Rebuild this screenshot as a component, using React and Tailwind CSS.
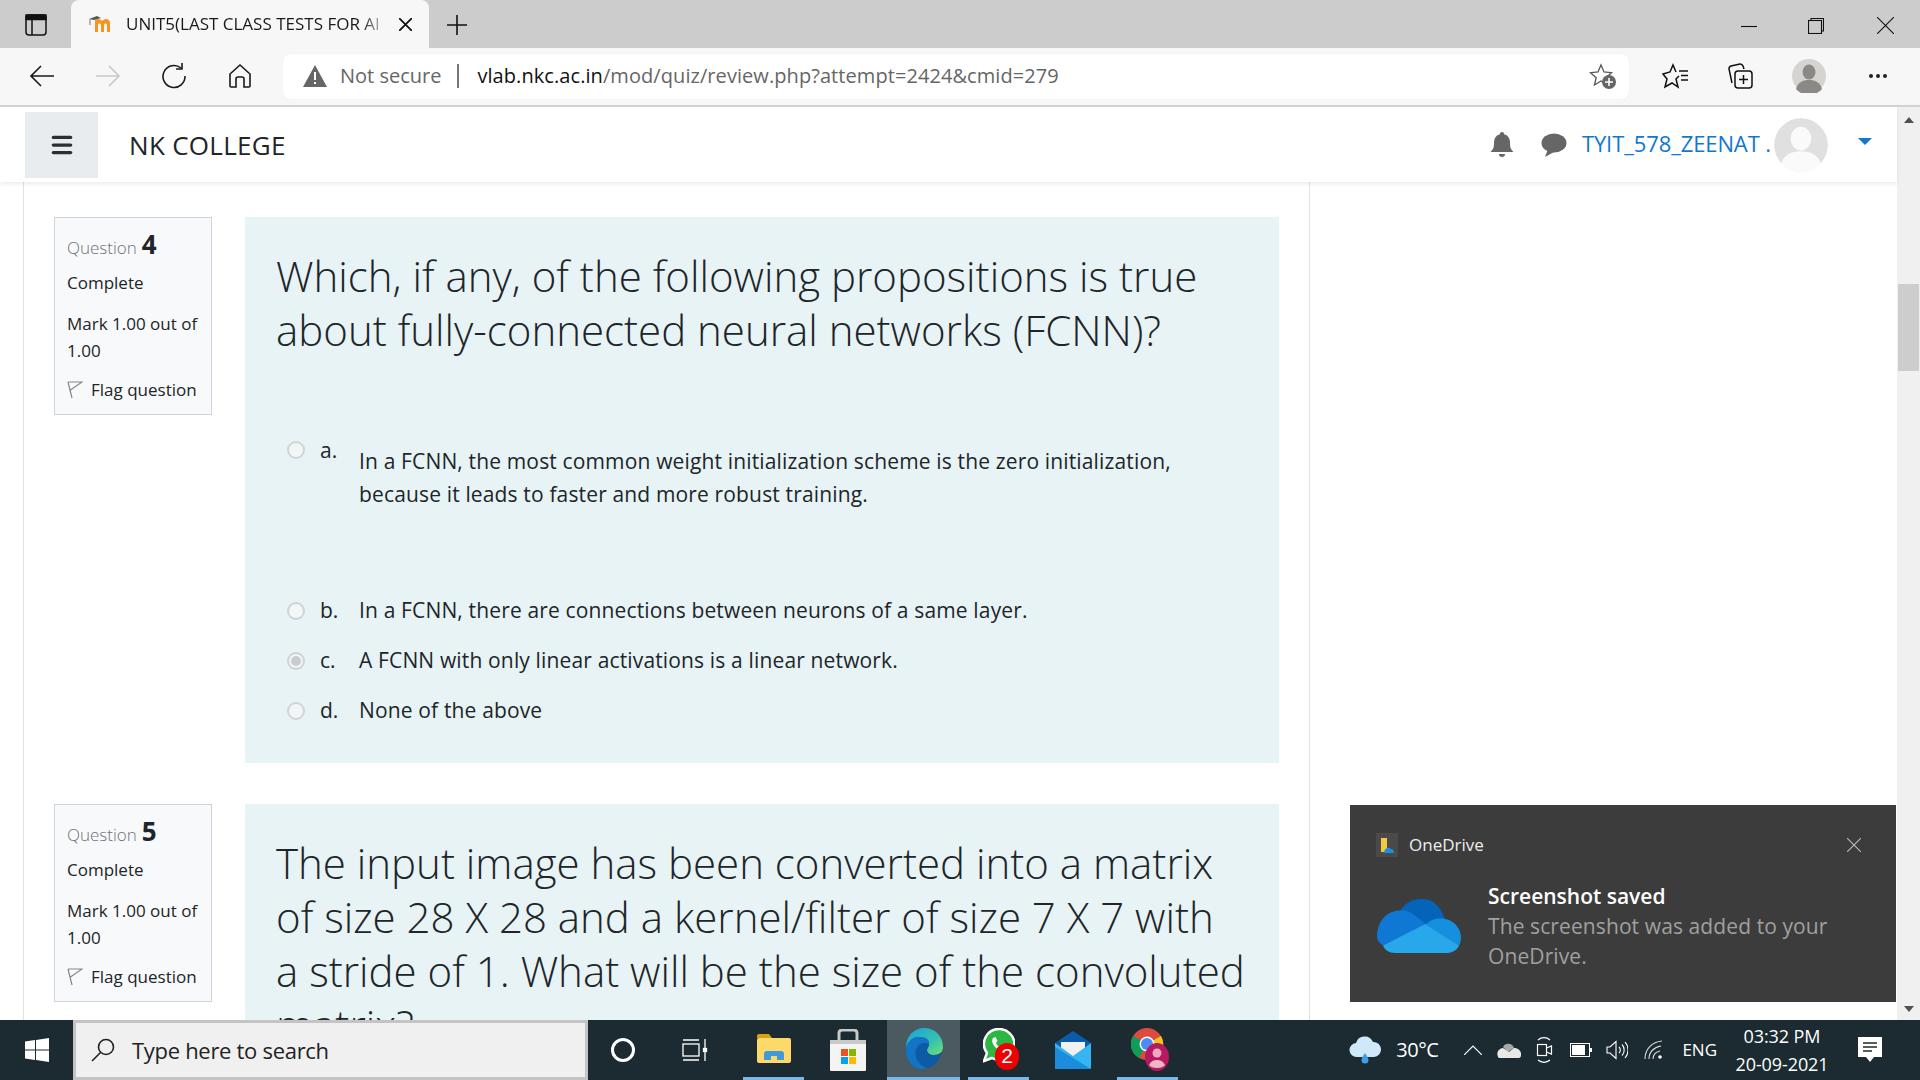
import React from "react";
import { Menu } from "lucide-react";

const uiFont = "font-['Open_Sans','Noto_Sans',sans-serif]";

const MoodleIcon = () => (
  <svg width="24" height="20" viewBox="0 0 24 20">
    <path d="M6 9v9h3v-7c0-2 3-2 3 0v7h3v-7c0-2 3-2 3 0v7h3V9c0-3-2-4-4-4-2 0-3 1-3.500 2C12 6 11 5 9 5 8 5 7 5.500 6 6z" fill="#f7931e" />
    <path d="M0 5l8-3 4 2-7 2z" fill="#555" />
    <path d="M1 5v6" stroke="#777" strokeWidth="1" />
  </svg>
);

const BackIcon = ({ color = "#1a1a1a" }) => (
  <svg width="26" height="24" viewBox="0 0 26 24" fill="none" stroke={color} strokeWidth="1.600">
    <path d="M2 12h23M12 2L2 12l10 10" />
  </svg>
);

const RefreshIcon = () => (
  <svg width="26" height="26" viewBox="0 0 26 26" fill="none" stroke="#1a1a1a" strokeWidth="1.600">
    <path d="M20 5a11 11 0 1 0 4 8" />
    <path d="M21 0v6h-6" />
  </svg>
);

const HomeIcon = () => (
  <svg width="24" height="26" viewBox="0 0 24 26" fill="none" stroke="#1a1a1a" strokeWidth="1.600">
    <path d="M2 11l10-9 10 9v12a1 1 0 0 1-1 1h-5v-8a2 2 0 0 0-2-2h-4a2 2 0 0 0-2 2v8H3a1 1 0 0 1-1-1z" />
  </svg>
);

const WarningIcon = () => (
  <svg width="24" height="22" viewBox="0 0 24 22">
    <path d="M12 0L24 22H0z" fill="#666" />
    <path d="M11 7h2v8h-2zM11 17h2v2h-2z" fill="#fff" />
  </svg>
);

const StarPlusIcon = () => (
  <svg width="28" height="26" viewBox="0 0 28 26" fill="none">
    <path d="M12 2l3 7 7.500.700-5.700 5 1.700 7.300L12 18l-6.500 4 1.700-7.300-5.700-5L9 9z" stroke="#555" strokeWidth="1.300" />
    <circle cx="20" cy="19" r="7" fill="#666" />
    <path d="M20 15v8M16 19h8" stroke="#fff" strokeWidth="1.600" />
  </svg>
);

const FavoritesIcon = () => (
  <svg width="28" height="26" viewBox="0 0 28 26" fill="none" stroke="#111" strokeWidth="1.500">
    <path d="M17 13l-3 3 2 8-6-4-7 4 2-8-4-5 7-2 3-7 3 7" />
    <path d="M17 8h9M19 12.500h7M19 17h7" />
  </svg>
);

const CollectionsIcon = () => (
  <svg width="28" height="28" viewBox="0 0 28 28" fill="none" stroke="#111" strokeWidth="1.500">
    <path d="M6 21l-3-14a3 3 0 0 1 2-3l9-2a3 3 0 0 1 3 2l1 3" />
    <rect x="9" y="9" width="17" height="17" rx="3" />
    <path d="M17.500 13v9M13 17.500h9" />
  </svg>
);

const PersonIcon = ({ size = 34, bg = "#d6d4d0", fg = "#8b8986" }) => (
  <svg width={size} height={size} viewBox="0 0 34 34">
    <circle cx="17" cy="17" r="17" fill={bg} />
    <ellipse cx="17" cy="13" rx="6.500" ry="7.500" fill={fg} />
    <path d="M4 30c2-7 7-9 13-9s11 2 13 9a17 17 0 0 1-26 0z" fill={fg} />
  </svg>
);

const BellIcon = () => (
  <svg width="24" height="26" viewBox="0 0 24 26" fill="#666">
    <path d="M12 0a2 2 0 0 1 2 2.300C18 3.200 20 6.500 20 11c0 5 1 6.500 3.500 9H.500C3 17.500 4 16 4 11c0-4.500 2-7.800 6-8.700A2 2 0 0 1 12 0z" />
    <path d="M9 22h6a3 3 0 0 1-6 0z" />
  </svg>
);

const ChatIcon = () => (
  <svg width="26" height="24" viewBox="0 0 26 24" fill="#666">
    <ellipse cx="13" cy="10" rx="12.500" ry="9.500" />
    <path d="M7 16l-3 8 9-5z" />
  </svg>
);

const FlagIcon = () => (
  <svg width="16" height="18" viewBox="0 0 16 18" fill="none" stroke="#888" strokeWidth="1.200">
    <path d="M1 1l4 16M1 1h14L3.500 9" />
  </svg>
);

const WindowsLogo = () => (
  <svg width="24" height="24" viewBox="0 0 24 24" fill="#fff">
    <path d="M0 3.400l10-1.400v9.500H0zM11 1.900L24 0v11.500H11zM0 12.500h10V22L0 20.600zM11 12.500h13V24l-13-1.900z" />
  </svg>
);

const SearchIcon = () => (
  <svg width="24" height="24" viewBox="0 0 24 24" fill="none" stroke="#222" strokeWidth="1.600">
    <circle cx="15" cy="9" r="7.500" />
    <path d="M9.500 14.500L1 23" />
  </svg>
);

const TaskViewIcon = () => (
  <svg width="26" height="24" viewBox="0 0 26 24" fill="none" stroke="#fff" strokeWidth="1.300">
    <path d="M1 2h16M1 22h16" />
    <rect x="1" y="6" width="16" height="12" />
    <path d="M23 1v9M23 14v9" />
    <rect x="21.500" y="10.500" width="3" height="3" fill="#fff" />
  </svg>
);

const ExplorerIcon = () => (
  <svg width="34" height="30" viewBox="0 0 34 30">
    <path d="M0 2a2 2 0 0 1 2-2h10l3 4H0z" fill="#d9a10f" />
    <rect y="4" width="34" height="25" rx="2" fill="#fcd96a" />
    <path d="M7 26v-6a3 3 0 0 1 3-3h14a3 3 0 0 1 3 3v6h-7v-4h-6v4z" fill="#3f9ad8" />
  </svg>
);

const StoreIcon = () => (
  <svg width="36" height="42" viewBox="0 0 36 42">
    <path d="M9 12V4a3 3 0 0 1 3-3h12a3 3 0 0 1 3 3v8" fill="none" stroke="#c8c8c8" strokeWidth="3" />
    <path d="M0 11h36v30a1 1 0 0 1-1 1H1a1 1 0 0 1-1-1z" fill="#f4f4f4" />
    <rect y="11" width="36" height="4" fill="#c9c9c9" />
    <rect x="11" y="20" width="7" height="7" fill="#f25022" />
    <rect x="19" y="20" width="7" height="7" fill="#7fba00" />
    <rect x="11" y="28" width="7" height="7" fill="#00a4ef" />
    <rect x="19" y="28" width="7" height="7" fill="#ffb900" />
  </svg>
);

const EdgeIcon = () => (
  <svg width="38" height="42" viewBox="0 0 38 42">
    <defs>
      <linearGradient id="edgeTop" x1="0" y1="0" x2="1" y2="1">
        <stop offset="0" stopColor="#1aa3d9" />
        <stop offset="0.600" stopColor="#35c1b0" />
        <stop offset="1" stopColor="#71e26d" />
      </linearGradient>
    </defs>
    <path d="M1 20C1 8 9 0 19 0c11 0 19 8 19 19 0 5-4 8-9 8-4 0-7-2-7-5 0-2 2-3 2-6 0-4-4-7-9-7C8 9 3 14 1 20z" fill="url(#edgeTop)" />
    <path d="M1 20C3 12 9 8 15 9c6 0 10 3 9 7-4-2-11-1-13 6-2 8 3 15 11 18a20 20 0 0 1-5 1C8 41 0 32 1 20z" fill="#1174c6" />
    <path d="M11 22c2-7 9-8 13-6 0 3-2 4-2 6 0 3 3 5 7 5 3 0 6-1 8-3-3 10-9 15-15 16-8-3-13-10-11-18z" fill="#0d5aa7" />
  </svg>
);

const WhatsappIcon = () => (
  <div className="relative w-[37px] h-[42px] ml-[6px]">
    <svg width="32" height="38" viewBox="0 0 32 38" className="absolute left-0 top-0">
      <path d="M16 1a15 15 0 0 1 0 31 15 15 0 0 1-7-2l-8 3 3-8A15 15 0 0 1 16 1z" fill="#2bb741" stroke="#fff" strokeWidth="2.500" />
      <path d="M10 10c-2 3 0 7 3 10s7 4 9 3l1-3-4-2-1.500 1.500c-2-1-3.500-2.500-4.500-4.500l1.500-2-2-4z" fill="#fff" />
    </svg>
    <div className="absolute left-[12px] top-[15px] w-[24px] h-[27px] rounded-full bg-[#f00000] flex items-center justify-center text-white text-[21px] font-['Liberation_Sans',sans-serif]">
      2
    </div>
  </div>
);

const MailIcon = () => (
  <svg width="36" height="38" viewBox="0 0 36 38">
    <path d="M0 12L18 0l18 12v6H0z" fill="#0a5ba8" />
    <path d="M6 11h24v10l-12 5-12-5z" fill="#f1f1f1" />
    <path d="M0 12l18 13 18-13v25a1 1 0 0 1-1 1H1a1 1 0 0 1-1-1z" fill="#36b5f0" />
    <path d="M0 38V16l36 22z" fill="#1c8ddc" />
  </svg>
);

const ChromeProfileIcon = () => (
  <svg width="38" height="44" viewBox="0 0 38 44" className="ml-[4px]">
    <circle cx="16" cy="17" r="16" fill="#db4c3f" />
    <path d="M16 17L30 9a16 16 0 0 1-14 24z" fill="#f5c518" />
    <path d="M16 17L8 31A16 16 0 0 1 2 9z" fill="#0f9d58" />
    <circle cx="16" cy="17" r="7.500" fill="#fff" />
    <circle cx="16" cy="17" r="6" fill="#4c8bf5" />
    <ellipse cx="26" cy="30" rx="12" ry="14" fill="#b6195f" />
    <circle cx="26" cy="26" r="4.500" fill="#f0a8c0" />
    <path d="M18 38c2-4 5-5 8-5s6 1 8 5c-2 4-14 4-16 0z" fill="#f0b6c8" />
  </svg>
);

const OneDriveCloud = ({ className }) => (
  <svg viewBox="0 0 84 58" preserveAspectRatio="none" className={className}>
    <path d="M20 22C22 8 33 0 45 0c10 0 18 6 23 22L50 38z" fill="#0364b8" />
    <path d="M0 40C0 24 10 12 24 12c4 0 8 1 12 4l14 12L6 50C2 47 0 44 0 40z" fill="#0f78d4" />
    <path d="M62 21c13-1 22 9 22 21 0 3-1 6-2 8L48 28c4-4 9-7 14-7z" fill="#1490df" />
    <path d="M6 50l42-23 34 23c-2 5-7 8-12 8H18c-6 0-10-3-12-8z" fill="#28a8ea" />
  </svg>
);

const OneDriveSmall = () => (
  <div className="w-[22px] h-[24px] bg-[#4a4a4a] flex items-center justify-center">
    <svg width="14" height="16" viewBox="0 0 14 16">
      <path d="M1 1h6v14H1z" fill="#f5c842" />
      <path d="M4 16c0-4 4-7 7-4 2 0 3 2 3 4z" fill="#1b8fe4" />
    </svg>
  </div>
);

const WeatherIcon = () => (
  <svg width="32" height="30" viewBox="0 0 32 30">
    <path d="M8 22a7 7 0 0 1-1-14 9 9 0 0 1 17-1 7.500 7.500 0 0 1 1 15z" fill="#cfe8fa" />
    <path d="M16 18c2 3 3.500 5 3.500 7a3.500 3.500 0 0 1-7 0c0-2 1.500-4 3.500-7z" fill="#3aa0e8" />
  </svg>
);

const TrayCloud = () => (
  <svg width="24" height="18" viewBox="0 0 24 18">
    <path d="M6 6a6 6 0 0 1 11 1l-6 4z" fill="#a8a8a8" />
    <path d="M2 17C-1 14 0 8 6 7l6 4 5-4c5 0 8 4 7 8-.5 1-1 2-2 2z" fill="#e8e8e8" />
  </svg>
);

const MeetIcon = () => (
  <svg width="18" height="26" viewBox="0 0 18 26" fill="none" stroke="#fff" strokeWidth="1.200">
    <path d="M2 3a9 9 0 0 1 12 0M2 23a9 9 0 0 0 12 0" />
    <rect x="1.500" y="7.500" width="9" height="11" />
    <path d="M10.500 11l5-2v8l-5-2" />
  </svg>
);

const BatteryIcon = () => (
  <svg width="22" height="14" viewBox="0 0 22 14">
    <rect x="0.500" y="0.500" width="19" height="13" fill="none" stroke="#fff" />
    <rect x="2" y="2" width="13" height="10" fill="#fff" />
    <rect x="20" y="5" width="2" height="4" fill="#fff" />
  </svg>
);

const VolumeIcon = () => (
  <svg width="22" height="20" viewBox="0 0 22 20" fill="none" stroke="#fff" strokeWidth="1.100">
    <path d="M1 7h3l6-5.500v17L4 13H1z" />
    <path d="M13 7a4 4 0 0 1 0 6M16 4.500a8 8 0 0 1 0 11M19 2a12 12 0 0 1 0 16" />
  </svg>
);

const WifiIcon = () => (
  <svg width="20" height="20" viewBox="0 0 20 20" fill="none" stroke="#ddd" strokeWidth="1.100">
    <path d="M1 19C1 9 8 2 18 1M5 19c0-7 5-12 12-13M9 19c0-4 3-7 7-8" />
    <circle cx="16" cy="17" r="1.800" fill="#fff" stroke="none" />
  </svg>
);

const ActionCenterIcon = () => (
  <svg width="24" height="26" viewBox="0 0 24 26">
    <path d="M0 0h24v20h-8l-4 5-4-5H0z" fill="#fff" />
    <path d="M5 6h14M5 10h14M5 14h9" stroke="#1b2b31" strokeWidth="1.300" />
  </svg>
);

const QuestionInfo = ({ number }) => (
  <div className="w-[158px] h-[198px] shrink-0 border border-[#ced4da] bg-[#f8f9fa] pl-3 pt-[13px] text-[17px] text-[#212529] leading-[27px]">
    <div className="h-[27px] flex items-baseline">
      <span className="text-[#6a737b] font-light">Question</span>
      <span className="ml-[5px] text-[26px] font-bold leading-[27px]">{number}</span>
    </div>
    <div className="mt-[11px]">Complete</div>
    <div className="mt-[14px]">Mark 1.00 out of 1.00</div>
    <div className="mt-[12px] flex items-center gap-[8px]">
      <FlagIcon />
      <span>Flag question</span>
    </div>
  </div>
);

const Radio = ({ checked }) => (
  <span className="w-[18px] h-[18px] rounded-full border-2 border-[#cfd4d6] bg-[#f3f6f7] flex items-center justify-center shrink-0">
    {checked && <span className="w-[10px] h-[10px] rounded-full bg-[#c9cccd]" />}
  </span>
);

const Option = ({ letter, checked, children }) => (
  <div className="flex items-center h-[50px]">
    <Radio checked={checked} />
    <span className="w-[54px] pl-[15px] text-[21px] shrink-0">{letter}</span>
    <span className="text-[21px] tracking-[0.15px]">{children}</span>
  </div>
);

const Notification = () => (
  <div className="absolute left-[1350px] top-[698px] w-[546px] h-[197px] bg-[#3c3c3c] text-white">
    <div className="flex items-center pl-[26px] pt-[27px]">
      <OneDriveSmall />
      <span className="ml-[11px] text-[17px] text-[#eeeeee]">OneDrive</span>
      <svg width="14" height="14" viewBox="0 0 14 14" className="ml-auto mr-[35px]" fill="none" stroke="#bbb" strokeWidth="1.100">
        <path d="M0 0l14 14M14 0L0 14" />
      </svg>
    </div>
    <div className="flex pl-[27px] pt-[23px]">
      <OneDriveCloud className="w-[84px] h-[54px] mt-[18px]" />
      <div className="ml-[27px]">
        <div className="text-[21px] leading-[30px] font-semibold">Screenshot saved</div>
        <div className="text-[21px] leading-[30px] text-[#a0a0a0] w-[370px] tracking-[0.1px]">
          The screenshot was added to your OneDrive.
        </div>
      </div>
    </div>
  </div>
);

function ForwardIcon() {
  return (
    <div className="scale-x-[-1]">
      <BackIcon color="#c8c8c8" />
    </div>
  );
}

export default function App() {
  return (
    <div className={`w-[1920px] h-[1080px] flex flex-col overflow-hidden bg-white ${uiFont}`}>
      {/* browser tabs */}
      <div className="h-[48px] shrink-0 bg-[#cccccc] flex items-end relative">
        <svg width="22" height="22" viewBox="0 0 22 22" fill="none" stroke="#111" strokeWidth="1.500" className="ml-[25px] mb-[12px]">
          <rect x="1" y="1" width="20" height="20" rx="3" />
          <path d="M7 5.500V21" />
          <path d="M1 1h20v4.500H1z" fill="#111" />
        </svg>
        <div className="ml-[24px] w-[358px] h-[48px] bg-[#f7f7f7] rounded-t-lg flex items-center pl-[18px]">
          <MoodleIcon />
          <span className="ml-[13px] w-[262px] text-[17px] text-[#1a1a1a] whitespace-nowrap overflow-hidden [mask-image:linear-gradient(to_right,black_90%,transparent)]">
            UNIT5(LAST CLASS TESTS FOR AI
          </span>
          <svg width="13" height="13" viewBox="0 0 13 13" fill="none" stroke="#111" strokeWidth="1.800" className="ml-[11px]">
            <path d="M0 0l13 13M13 0L0 13" />
          </svg>
        </div>
        <svg width="20" height="20" viewBox="0 0 20 20" fill="none" stroke="#111" strokeWidth="1.600" className="ml-[18px] mb-[13px]">
          <path d="M10 0v20M0 10h20" />
        </svg>
        <div className="ml-auto flex items-center mb-[14px]">
          <svg width="16" height="16" viewBox="0 0 16 16" fill="none" stroke="#111" strokeWidth="1.100">
            <path d="M0 8.500h16" />
          </svg>
          <svg width="16" height="16" viewBox="0 0 16 16" fill="none" stroke="#111" strokeWidth="1.100" className="ml-[51px]">
            <rect x="0.500" y="2.500" width="13" height="13" />
            <path d="M3 2.500V.5h12.500V13h-2" />
          </svg>
          <svg width="17" height="17" viewBox="0 0 17 17" fill="none" stroke="#111" strokeWidth="1.100" className="ml-[53px] mr-[26px]">
            <path d="M0 0l17 17M17 0L0 17" />
          </svg>
        </div>
      </div>

      {/* address bar */}
      <div className="h-[59px] shrink-0 bg-[#f7f7f7] border-b-2 border-[#d2d2d2] flex items-center pl-[29px] pb-[1px]">
        <BackIcon />
        <div className="ml-[40px]"><ForwardIcon /></div>
        <div className="ml-[40px]"><RefreshIcon /></div>
        <div className="ml-[41px]"><HomeIcon /></div>
        <div className="ml-[31px] w-[1346px] h-[45px] bg-white rounded-lg flex items-center pl-[20px] pr-[12px] shadow-[0_0_2px_rgba(0,0,0,0.05)]">
          <WarningIcon />
          <span className="ml-[13px] text-[20px] text-[#666666]">Not secure</span>
          <span className="ml-[16px] w-[2px] h-[24px] bg-[#777777]" />
          <span className="ml-[18px] text-[20px] tracking-[0.07px] text-[#666666]">
            <span className="text-[#111111]">vlab.nkc.ac.in</span>/mod/quiz/review.php?attempt=2424&amp;cmid=279
          </span>
          <div className="ml-auto"><StarPlusIcon /></div>
        </div>
        <div className="ml-[33px]"><FavoritesIcon /></div>
        <div className="ml-[36px]"><CollectionsIcon /></div>
        <div className="ml-[38px]"><PersonIcon /></div>
        <div className="ml-[43px] flex gap-[3px]">
          <span className="w-[4px] h-[4px] rounded-full bg-[#222]" />
          <span className="w-[4px] h-[4px] rounded-full bg-[#222]" />
          <span className="w-[4px] h-[4px] rounded-full bg-[#222]" />
        </div>
      </div>

      {/* page */}
      <div className="flex-1 min-h-0 flex relative">
        <div className="flex-1 min-w-0 flex flex-col">
          <header className="h-[75px] shrink-0 bg-white shadow-[0_2px_4px_rgba(0,0,0,0.08)] z-10 flex items-center pl-[25px]">
            <div className="w-[73px] h-[66px] bg-[#e9ecef] flex items-center justify-center">
              <Menu size={26} strokeWidth={3} color="#2b2f33" />
            </div>
            <span className="ml-[31px] mt-[2px] text-[26px] tracking-[0.3px] text-[#212529]">NK COLLEGE</span>
            <div className="ml-auto flex items-center">
              <BellIcon />
              <div className="ml-[27px]"><ChatIcon /></div>
              <span className="ml-[15px] mb-[3px] text-[22px] tracking-[-0.1px] text-[#1177d1] whitespace-nowrap">TYIT_578_ZEENAT .</span>
              <div className="ml-[3px] w-[54px] h-[54px] rounded-full overflow-hidden">
                <PersonIcon size={54} bg="#e0e0e0" fg="#fafafa" />
              </div>
              <span className="ml-[30px] mr-[25px] mb-[6px] w-0 h-0 border-x-[7px] border-x-transparent border-t-[7px] border-t-[#1177d1]" />
            </div>
          </header>

          <div className="flex-1 min-h-0 overflow-hidden ml-[23px] w-[1287px] border-x border-[#dfe3e6] pt-[35px] pl-[30px]">
            <div className="flex gap-[33px] mb-[41px]">
              <QuestionInfo number="4" />
              <div className="w-[1034px] h-[546px] shrink-0 bg-[#e7f3f5] pl-[31px] pt-[32px] text-[#212529]">
                <h3 className="text-[42px] leading-[54px] font-light w-[980px]">
                  Which, if any, of the following propositions is true about fully-connected neural networks (FCNN)?
                </h3>
                <div className="mt-[79px] pl-[11px]">
                  <div className="flex items-start h-[150px]">
                    <div className="pt-[5px]"><Radio /></div>
                    <span className="w-[54px] pl-[15px] mt-[-1px] text-[21px] shrink-0">a.</span>
                    <span className="pt-[9px] text-[21px] leading-[33px] tracking-[0.15px] w-[850px]">
                      In a FCNN, the most common weight initialization scheme is the zero initialization, because it leads to faster and more robust training.
                    </span>
                  </div>
                  <Option letter="b.">In a FCNN, there are connections between neurons of a same layer.</Option>
                  <Option letter="c." checked>A FCNN with only linear activations is a linear network.</Option>
                  <Option letter="d.">None of the above</Option>
                </div>
              </div>
            </div>
            <div className="flex gap-[33px]">
              <QuestionInfo number="5" />
              <div className="w-[1034px] shrink-0 bg-[#e7f3f5] pl-[31px] pt-[32px] text-[#212529]">
                <h3 className="text-[42px] leading-[54px] font-light w-[980px]">
                  The input image has been converted into a matrix<br />
                  of size 28 X 28 and a kernel/filter of size 7 X 7 with<br />
                  a stride of 1. What will be the size of the convoluted<br />
                  matrix?
                </h3>
              </div>
            </div>
          </div>
        </div>

        {/* scrollbar */}
        <div className="w-[23px] shrink-0 bg-[#f0f0f0] flex flex-col items-center pt-[10px] pb-[8px]">
          <span className="w-0 h-0 border-x-[5px] border-x-transparent border-b-[6px] border-b-[#505050]" />
          <div className="mt-[161px] w-[21px] h-[87px] bg-[#cdcdcd]" />
          <span className="mt-auto w-0 h-0 border-x-[5px] border-x-transparent border-t-[6px] border-t-[#505050]" />
        </div>

        <Notification />
      </div>

      {/* taskbar */}
      <div className="h-[60px] shrink-0 bg-[#1b2b31] flex items-center text-white">
        <div className="w-[73px] flex justify-center"><WindowsLogo /></div>
        <div className="w-[515px] h-[60px] bg-[#f0f0f0] border-[3px] border-[#c4c4c4] flex items-center pl-[15px] text-[#222222]">
          <SearchIcon />
          <span className="ml-[17px] text-[22px] tracking-[-0.3px]">Type here to search</span>
        </div>
        <div className="ml-[23px] w-[24px] h-[24px] rounded-full border-[3px] border-white" />
        <div className="ml-[47px]"><TaskViewIcon /></div>
        <div className="ml-[35px] w-[61px] h-[60px] flex items-center justify-center border-b-[3px] border-[#76b9ed]"><ExplorerIcon /></div>
        <div className="ml-[13px] w-[61px] h-[60px] flex items-center justify-center"><StoreIcon /></div>
        <div className="ml-[9px] w-[73px] h-[60px] bg-[#4a5a60] flex items-center justify-center border-b-[3px] border-[#76b9ed]"><EdgeIcon /></div>
        <div className="ml-[8px] w-[61px] h-[60px] flex items-center justify-center border-b-[3px] border-[#76b9ed]"><WhatsappIcon /></div>
        <div className="ml-[13px] w-[61px] h-[60px] flex items-center justify-center"><MailIcon /></div>
        <div className="ml-[14px] w-[61px] h-[60px] flex items-center justify-center border-b-[3px] border-[#76b9ed]"><ChromeProfileIcon /></div>

        <div className="ml-auto flex items-center">
          <WeatherIcon />
          <span className="ml-[15px] text-[20px] tracking-[-0.5px]">30°C</span>
          <svg width="18" height="10" viewBox="0 0 18 10" fill="none" stroke="#fff" strokeWidth="1.200" className="ml-[26px]">
            <path d="M0 10l9-9 9 9" />
          </svg>
          <div className="ml-[15px]"><TrayCloud /></div>
          <div className="ml-[15px]"><MeetIcon /></div>
          <div className="ml-[16px]"><BatteryIcon /></div>
          <div className="ml-[14px]"><VolumeIcon /></div>
          <div className="ml-[16px]"><WifiIcon /></div>
          <span className="ml-[18px] text-[17px]">ENG</span>
          <div className="ml-[18px] w-[94px] text-center text-[18px] leading-[28px] tracking-[-0.1px] whitespace-nowrap">
            <div>03:32 PM</div>
            <div>20-09-2021</div>
          </div>
          <div className="ml-[29px] mr-[38px]"><ActionCenterIcon /></div>
        </div>
      </div>
    </div>
  );
}
